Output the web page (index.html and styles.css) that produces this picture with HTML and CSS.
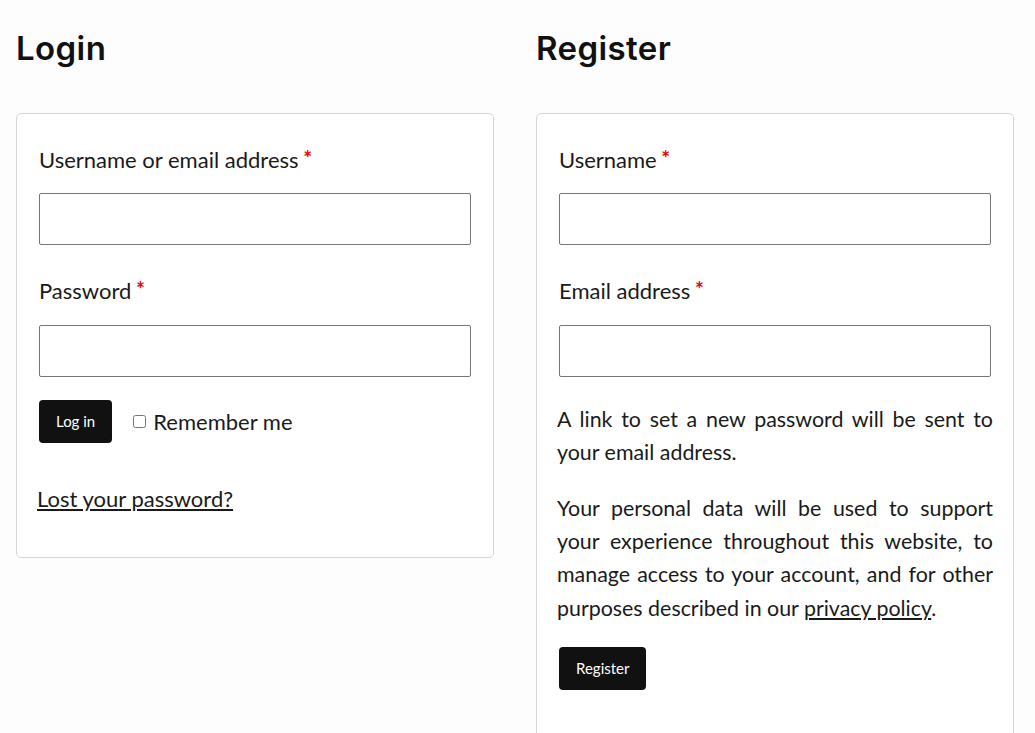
FILE: index.html
```html
<!DOCTYPE html>
<html lang="en">
<head>
  <meta charset="UTF-8">
  <title>My account</title>
  <link rel="stylesheet" href="styles.css">
</head>
<body>
  <div class="account">
    <div class="col">
      <h2>Login</h2>
      <form class="account-form">
        <div class="form-row">
          <label for="loginUser">Username or email address <span class="required">*</span></label>
          <input type="text" id="loginUser">
        </div>
        <div class="form-row">
          <label for="loginPass">Password <span class="required">*</span></label>
          <input type="password" id="loginPass">
        </div>
        <div class="form-row actions">
          <button type="button" class="btn">Log in</button>
          <label class="remember"><input type="checkbox"> Remember me</label>
        </div>
        <p class="lost"><a href="#">Lost your password?</a></p>
      </form>
    </div>

    <div class="col">
      <h2>Register</h2>
      <form class="account-form">
        <div class="form-row">
          <label for="regUser">Username <span class="required">*</span></label>
          <input type="text" id="regUser">
        </div>
        <div class="form-row">
          <label for="regEmail">Email address <span class="required">*</span></label>
          <input type="email" id="regEmail">
        </div>
        <p class="note first">A link to set a new password will be sent to your email address.</p>
        <p class="note">Your personal data will be used to support your experience throughout this website, to manage access to your account, and for other purposes described in our <a href="#">privacy policy</a>.</p>
        <div class="form-row">
          <button type="button" class="btn">Register</button>
        </div>
      </form>
    </div>
  </div>
</body>
</html>
```

FILE: styles.css
```css
body {
  font-family: "Lato", "Liberation Sans", sans-serif;
  background: #fdfdfd;
  color: #1a1a1a;
  margin: 0;
  padding: 28px 21px 0 16px;
}

.account {
  display: grid;
  grid-template-columns: 478px 478px;
  gap: 42px;
}

h2 {
  font-family: "Inter", "Open Sans", sans-serif;
  font-weight: 600;
  font-size: 33px;
  line-height: 40px;
  margin: 0 0 45px;
  color: #111;
  letter-spacing: 0.4px;
}

.account-form {
  border: 1px solid #d6d6d6;
  border-radius: 5px;
  padding: 29px 20px 42px;
  background: #fff;
  font-size: 22px;
  line-height: 33.4px;
}

.form-row {
  padding: 0 2px;
  margin-bottom: 29px;
}

.form-row label {
  display: block;
  margin-bottom: 17px;
}

.required {
  color: #e00;
  font-weight: bold;
  font-size: 21px;
  line-height: 1;
  vertical-align: 2px;
  margin-left: -1px;
}

.form-row input[type="text"],
.form-row input[type="password"],
.form-row input[type="email"] {
  display: block;
  box-sizing: border-box;
  width: 100%;
  height: 52px;
  border: 1px solid #777;
  border-radius: 2px;
  background: #fff;
  font-size: 18px;
}

.form-row.actions {
  display: flex;
  align-items: center;
  gap: 21px;
  margin-top: -6px;
  margin-bottom: 0;
}

.btn {
  font-family: "Lato", sans-serif;
  font-size: 15px;
  line-height: 1;
  background: #111;
  color: #fff;
  border: none;
  border-radius: 4px;
  height: 43px;
  padding: 0 17px;
  cursor: pointer;
}

.form-row .remember {
  display: flex;
  align-items: center;
  gap: 7px;
  margin: 0;
}

.remember input {
  margin: 0;
  width: 13px;
  height: 13px;
}

.lost {
  margin: 39px 0 0;
}

a {
  color: #1a1a1a;
  text-decoration: underline;
}

.note {
  font-size: 21.4px;
  text-align: justify;
  margin: 0 0 22px;
}

.note.first {
  margin-top: -3px;
}

.note + .form-row {
  margin-top: 2px;
}
```
